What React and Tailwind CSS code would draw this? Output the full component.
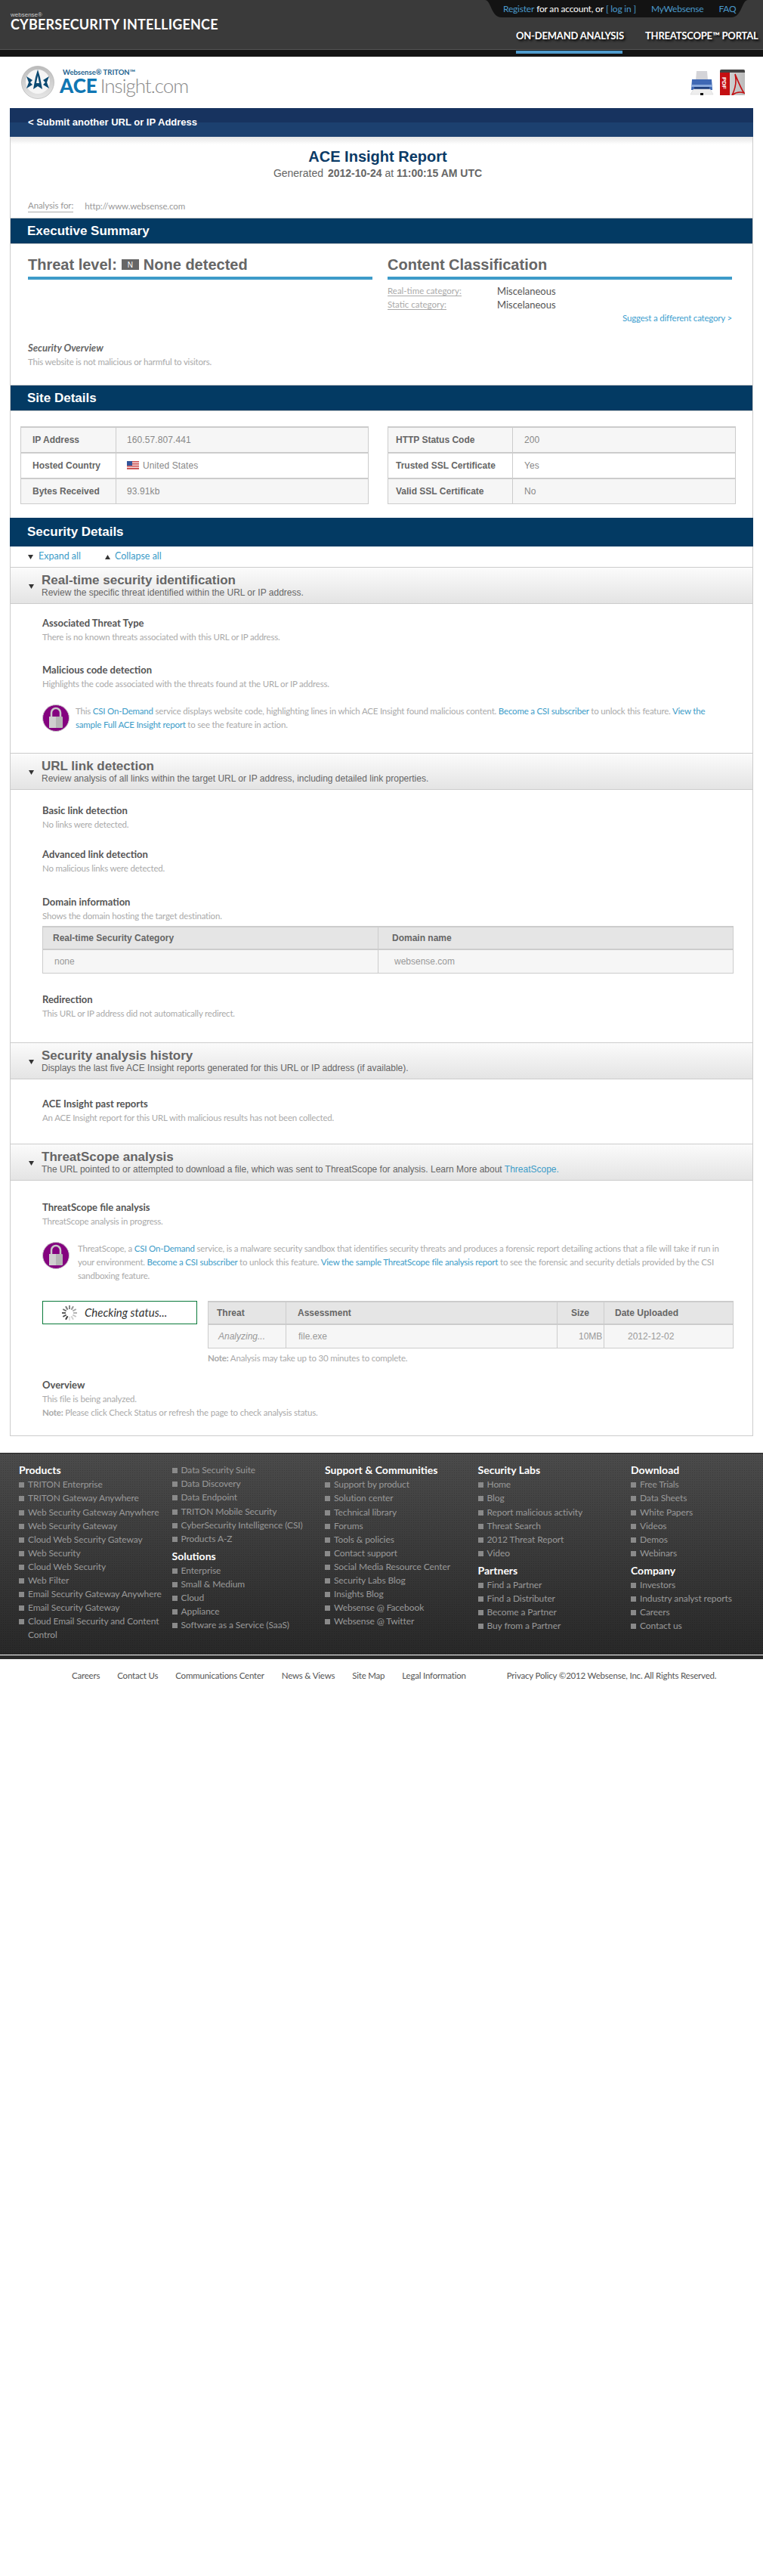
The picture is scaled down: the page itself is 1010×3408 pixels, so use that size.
import React from 'react';

const sans = "font-['Liberation_Sans',Arial,sans-serif]";

const footerCols = [
    [{ heading: 'Products', items: ['TRITON Enterprise', 'TRITON Gateway Anywhere', 'Web Security Gateway Anywhere', 'Web Security Gateway', 'Cloud Web Security Gateway', 'Web Security', 'Cloud Web Security', 'Web Filter', 'Email Security Gateway Anywhere', 'Email Security Gateway', 'Cloud Email Security and Content Control'] }],
    [
        { items: ['Data Security Suite', 'Data Discovery', 'Data Endpoint', 'TRITON Mobile Security', 'CyberSecurity Intelligence (CSI)', 'Products A-Z'] },
        { heading: 'Solutions', items: ['Enterprise', 'Small & Medium', 'Cloud', 'Appliance', 'Software as a Service (SaaS)'] },
    ],
    [{ heading: 'Support & Communities', items: ['Support by product', 'Solution center', 'Technical library', 'Forums', 'Tools & policies', 'Contact support', 'Social Media Resource Center', 'Security Labs Blog', 'Insights Blog', 'Websense @ Facebook', 'Websense @ Twitter'] }],
    [
        { heading: 'Security Labs', items: ['Home', 'Blog', 'Report malicious activity', 'Threat Search', '2012 Threat Report', 'Video'] },
        { heading: 'Partners', items: ['Find a Partner', 'Find a Distributer', 'Become a Partner', 'Buy from a Partner'] },
    ],
    [
        { heading: 'Download', items: ['Free Trials', 'Data Sheets', 'White Papers', 'Videos', 'Demos', 'Webinars'] },
        { heading: 'Company', items: ['Investors', 'Industry analyst reports', 'Careers', 'Contact us'] },
    ],
];

const bottomLinks = ['Careers', 'Contact Us', 'Communications Center', 'News & Views', 'Site Map', 'Legal Information'];

const A = ({ children }) => <a className="text-[#3c9cc8]">{children}</a>;

const SectionBar = ({ title }) => (
    <div className={`h-[35px] border-y border-[#ccc] bg-[#033a63] pl-[22px] text-[17px] font-bold leading-[33px] text-white ${sans}`}>
        {title}
    </div>
);

const Triangle = ({ up, className }) => (
    <svg width="7" height="6" viewBox="0 0 7 6" className={className}>
        <path d={up ? 'M3.5 0 L7 6 L0 6 Z' : 'M0 0 L7 0 L3.5 6 Z'} fill="#333" />
    </svg>
);

const AccordionHead = ({ title, children }) => (
    <div className="relative h-[49px] border-y border-[#ccc] bg-gradient-to-b from-[#fbfbfb] to-[#e4e4e4] pl-[41px] pt-[7px]">
        <Triangle className="absolute left-[24px] top-[22px]" />
        <div className={`text-[17px] font-bold leading-[20px] text-[#666] ${sans}`}>{title}</div>
        <div className={`-mt-px text-[12px] leading-[14px] text-[#666] ${sans}`}>{children}</div>
    </div>
);

const Item = ({ title, className = '', children }) => (
    <div className={className}>
        <div className="text-[13px] font-bold leading-[18px] text-[#555]">{title}</div>
        <div className="mt-px text-[11.5px] leading-[18px] tracking-[-0.2px] text-[#aaa]">{children}</div>
    </div>
);

const Lock = () => (
    <svg width="36" height="36" viewBox="0 0 36 36" className="shrink-0">
        <ellipse cx="18" cy="18" rx="17.5" ry="17.5" fill="#84037f" stroke="#c9c9c9" strokeWidth="1" />
        <path d="M12 17 V11 a6 6 0 0 1 12 0 V17" fill="none" stroke="#c8c8c8" strokeWidth="2.5" />
        <rect x="9" y="16" width="18" height="15" rx="1" fill="#b5b5b5" />
        <rect x="9" y="16" width="9" height="15" fill="#cfcfcf" />
    </svg>
);

const Spinner = () => (
    <svg width="24" height="24" viewBox="0 0 24 24">
        {[...Array(12)].map((_, i) => (
            <line key={i} x1="12" y1="2" x2="12" y2="7" stroke={`rgb(${60 + i * 15},${60 + i * 15},${60 + i * 15})`} strokeWidth="2" transform={`rotate(${i * 30 - 150} 12 12)`} />
        ))}
    </svg>
);

const Flag = () => (
    <svg width="16" height="11" viewBox="0 0 16 11" className="mr-[5px] inline-block align-[-1px]">
        <rect width="16" height="11" fill="#f4d8d8" />
        <rect y="0" width="16" height="1.5" fill="#c55" />
        <rect y="3" width="16" height="1.5" fill="#c55" />
        <rect y="6" width="16" height="1.5" fill="#c55" />
        <rect y="9" width="16" height="2" fill="#c55" />
        <rect width="7" height="6" fill="#33559a" />
    </svg>
);

const Printer = () => (
    <svg width="34" height="34" viewBox="0 0 34 34">
        <path d="M10 2 H24 L25 14 H9 Z" fill="#d4d4d8" />
        <path d="M4 13 H30 L31 27 H3 Z" fill="#3f68b4" />
        <rect x="3" y="20" width="28" height="3" fill="#8aa9dc" />
        <rect x="7" y="23" width="20" height="3" fill="#1f3f7d" />
        <path d="M6 26 H28 L32 33 H2 Z" fill="#eee" stroke="#ccc" strokeWidth="0.5" />
        <rect x="15" y="31" width="4" height="3" fill="#111" />
    </svg>
);

const PdfBook = () => (
    <div className="relative h-[34px] w-[33px] overflow-hidden rounded-t-[2px] bg-gradient-to-r from-[#ddd] to-[#bbb]">
        <div className="absolute inset-x-0 top-0 h-[4px] bg-[#444]" />
        <div className="absolute bottom-0 left-0 top-[4px] w-[13px] bg-[#c40f12]" />
        <span className={`absolute left-[-3px] top-[14px] rotate-90 text-[8px] font-bold leading-[8px] text-white ${sans}`}>PDF</span>
        <svg width="20" height="30" viewBox="0 0 20 30" className="absolute left-[13px] top-[4px]">
            <path d="M3 30 C8 20 9 10 7 2 C12 14 15 22 19 27 C13 25 8 26 3 30 Z" fill="none" stroke="#c40f12" strokeWidth="1.6" />
        </svg>
    </div>
);

const AceLogo = () => (
    <svg width="44" height="44" viewBox="0 0 44 44" className="shrink-0">
        <defs>
            <linearGradient id="ring" x1="0" y1="0" x2="0" y2="1">
                <stop offset="0" stopColor="#bbb" />
                <stop offset="1" stopColor="#e6e6e6" />
            </linearGradient>
        </defs>
        <circle cx="22" cy="22" r="21.5" fill="url(#ring)" stroke="#aaa" strokeWidth="0.6" />
        <circle cx="22" cy="21" r="16" fill="#f5f5f5" />
        <path d="M22 5 L25 15 L28 31 L22 27 L16 31 L19 15 Z" fill="#0c4a72" />
        <path d="M7 14 L15 19 L12 22 L15 25 L7 30 L10 22 Z" fill="#0c4a72" />
        <path d="M37 14 L29 19 L32 22 L29 25 L37 30 L34 22 Z" fill="#0c4a72" />
        <path d="M22 13 L24 23 H20 Z" fill="#f5f5f5" />
    </svg>
);

const DetailTable = ({ rows, firstW, labelPad, valuePad }) => (
    <div className="w-[461px] border-x border-b border-t-2 border-[#ccc]">
        {rows.map((row, i) => (
            <div key={row[0]} className={`flex items-center ${i > 0 ? 'h-[34px] border-t-2 border-[#ccc]' : 'h-[32px]'} ${i === 1 ? 'bg-white' : 'bg-[#f6f6f6]'} ${sans}`}>
                <div style={{ width: firstW, paddingLeft: labelPad }} className="flex h-full shrink-0 items-center border-r border-[#ccc] text-[12px] font-bold text-[#666]">
                    {row[0]}
                </div>
                <div style={{ paddingLeft: valuePad }} className="text-[12px] tracking-[0.1px] text-[#888]">
                    {row[2] && <Flag />}{row[1]}
                </div>
            </div>
        ))}
    </div>
);

const DataTable = ({ cols, values, className = '' }) => (
    <div className={`border-x border-b border-t-2 border-[#ccc] ${sans} ${className}`}>
        <div className="flex h-[28px] bg-[#e5e5e5] text-[12px] font-bold text-[#666]">
            {cols.map((c, i) => (
                <div key={c.label} style={{ width: c.w, paddingLeft: c.pl }} className={`flex shrink-0 items-center ${i < cols.length - 1 ? 'border-r border-[#ccc]' : ''}`}>
                    {c.label}
                </div>
            ))}
        </div>
        <div className="flex h-[32px] border-t-2 border-[#ccc] bg-[#f6f6f6] text-[12px] text-[#999]">
            {values.map((v, i) => (
                <div key={v.text} style={{ width: cols[i].w, paddingLeft: v.pl }} className={`flex shrink-0 items-center ${v.italic ? 'italic' : ''} ${i < cols.length - 1 ? 'border-r border-[#ccc]' : ''}`}>
                    {v.text}
                </div>
            ))}
        </div>
    </div>
);

const FooterCol = ({ groups }) => (
    <div className="w-[202.5px] shrink-0 pr-[4px]">
        {groups.map((g, gi) => (
            <div key={gi} className={gi > 0 ? 'mt-[5px]' : ''}>
                {g.heading && <div className="mb-px text-[14px] font-bold leading-[18px] text-white">{g.heading}</div>}
                <ul>
                    {g.items.map((item, i) => (
                        <li key={item} className={`flex text-[12px] leading-[18px] tracking-[-0.1px] text-[#999] ${gi === 0 && i === (g.heading ? 2 : 3) ? 'mt-px' : ''}`}>
                            <span className="mr-[5px] mt-[6px] h-[7px] w-[7px] shrink-0 bg-[#8a8a8a]" />
                            <span>{item}</span>
                        </li>
                    ))}
                </ul>
            </div>
        ))}
    </div>
);

const App = () => {
    return (
        <div className="min-h-[3408px] w-[1010px] bg-white font-[Lato,sans-serif]">
            {/* Top bar */}
            <div className="flex h-[66px] justify-between border-b border-[#555] bg-[#3a3a3a]">
                <div className="pl-[14px] pt-[15px]">
                    <div className={`text-[8px] leading-[9px] text-[#ccc] ${sans}`}>websense®</div>
                    <div className="whitespace-nowrap text-[18px] font-bold leading-[16px] tracking-[0.2px] text-white">CYBERSECURITY INTELLIGENCE</div>
                </div>
                <div className="w-[368px]">
                    <div className="flex h-[23px] w-[348px] items-center whitespace-nowrap bg-[#131313] pl-[24px] text-[12px] tracking-[-0.2px] text-white [clip-path:path('M0,0_C8,0_8,23_22,23_L326,23_C340,23_340,0_348,0Z')]">
                        <span className="text-[#4a9acb]">Register</span>
                        <span className="ml-[3px]">for an account, or</span>
                        <span className="ml-[3px] text-[#4a9acb]">[ log in ]</span>
                        <span className="ml-[20px] text-[#4a9acb]">MyWebsense</span>
                        <span className="ml-[20px] text-[#4a9acb]">FAQ</span>
                    </div>
                    <div className="flex whitespace-nowrap pl-[41px] pt-[14px] text-[13px] font-bold leading-[20px] tracking-[-0.2px] text-white [text-shadow:2px_2px_3px_#000]">
                        <span className="w-[171px]">ON-DEMAND ANALYSIS</span>
                        <span>THREATSCOPE™ PORTAL</span>
                    </div>
                </div>
            </div>
            <div className="h-[9px] bg-[#141414] pl-[683px] pt-px">
                <div className="h-[4px] w-[141px] bg-[#4f9bcd]" />
            </div>

            {/* Logo row */}
            <div className="flex h-[68px] items-center justify-between pl-[28px] pr-[24px]">
                <div className="flex items-center">
                    <AceLogo />
                    <div className="ml-[7px] pb-[4px]">
                        <div className="pl-[4px] text-[9.5px] font-bold leading-[12px] text-[#25648f]">Websense® TRITON™</div>
                        <div className="flex items-baseline leading-[22px]">
                            <span className="text-[26px] font-black text-[#0f76b3]">ACE</span>
                            <span className="ml-[4px] text-[26px] font-light tracking-[-1px] text-[#8a8a8a]">Insight.com</span>
                        </div>
                    </div>
                </div>
                <div className="flex items-center gap-[7px]">
                    <Printer />
                    <PdfBook />
                </div>
            </div>

            {/* Submit bar */}
            <div className={`mx-[13px] h-[38px] bg-[linear-gradient(#17335f_50%,#1c406f_50%)] pl-[24px] text-[13px] font-bold leading-[37px] text-white ${sans}`}>
                &lt; Submit another URL or IP Address
            </div>

            {/* Report card */}
            <div className="mx-[13px] border-x border-b border-[#ccc] bg-[linear-gradient(#e4e4e4,#fff_10px)]">
                <div className={`pt-[14px] text-center ${sans}`}>
                    <div className="pr-[10px] text-[20px] font-bold leading-[24px] text-[#0b3a66]">ACE Insight Report</div>
                    <div className="pr-[10px] text-[14px] leading-[20px] text-[#666]">Generated <b className="ml-[2px]">2012-10-24</b> at <b>11:00:15 AM UTC</b></div>
                </div>
                <div className="mt-[25px] flex pl-[23px] text-[11.5px] leading-[18px] tracking-[-0.1px] text-[#999]">
                    <span className="h-[17px] border-b border-[#aaa] leading-[16px]">Analysis for:</span>
                    <span className="ml-[15px]">http://www.websense.com</span>
                </div>
                <div className="h-[6px]" />

                <SectionBar title="Executive Summary" />
                <div className="flex h-[128px] gap-[20px] pl-[23px] pt-[13px]">
                    <div className="w-[456px]">
                        <div className={`flex h-[28px] items-center text-[20px] font-bold text-[#666] ${sans}`}>
                            Threat level:
                            <span className="mx-[6px] flex h-[14px] w-[23px] items-center justify-center bg-[#666] text-[10px] font-normal text-white">N</span>
                            None detected
                        </div>
                        <div className="mt-[2px] h-[4px] bg-[#3e9bc9]" />
                    </div>
                    <div className="w-[456px]">
                        <div className={`flex h-[28px] items-center text-[20px] font-bold text-[#666] ${sans}`}>Content Classification</div>
                        <div className="mt-[2px] h-[4px] bg-[#3e9bc9]" />
                        <div className="mt-[6px] flex text-[11.5px] leading-[18px]">
                            <span className="w-[145px] text-[#aaa]"><span className="border-b border-[#aaa]">Real-time category:</span></span>
                            <span className="text-[13px] text-[#555]">Miscelaneous</span>
                        </div>
                        <div className="flex text-[11.5px] leading-[18px]">
                            <span className="w-[145px] text-[#aaa]"><span className="border-b border-[#aaa]">Static category:</span></span>
                            <span className="text-[13px] text-[#555]">Miscelaneous</span>
                        </div>
                        <div className="text-right text-[11.5px] leading-[18px] tracking-[-0.2px] text-[#3ea0cf]">Suggest a different category &gt;</div>
                    </div>
                </div>
                <div className="pl-[23px]">
                    <div className="text-[13px] font-bold italic leading-[18px] text-[#666]">Security Overview</div>
                    <div className="mt-px text-[11.5px] leading-[18px] tracking-[-0.2px] text-[#aaa]">This website is not malicious or harmful to visitors.</div>
                </div>
                <div className="h-[21px]" />

                <SectionBar title="Site Details" />
                <div className="flex gap-[25px] pl-[13px] pt-[20px]">
                    <DetailTable
                        firstW={126}
                        labelPad={15}
                        valuePad={14}
                        rows={[['IP Address', '160.57.807.441'], ['Hosted Country', 'United States', true], ['Bytes Received', '93.91kb']]}
                    />
                    <DetailTable
                        firstW={165}
                        labelPad={10}
                        valuePad={15}
                        rows={[['HTTP Status Code', '200'], ['Trusted SSL Certificate', 'Yes'], ['Valid SSL Certificate', 'No']]}
                    />
                </div>

                <div className={`-mx-px mt-[18px] h-[38px] bg-[#033a63] pl-[23px] text-[17px] font-bold leading-[37px] text-white ${sans}`}>Security Details</div>
                <div className="flex h-[27px] items-center pl-[23px] text-[12.5px] text-[#3c9cc8]">
                    <Triangle />
                    <span className="ml-[7px] w-[88px]">Expand all</span>
                    <Triangle up />
                    <span className="ml-[6px]">Collapse all</span>
                </div>

                {/* Real-time */}
                <AccordionHead title="Real-time security identification">Review the specific threat identified within the URL or IP address.</AccordionHead>
                <div className="pb-[28px] pl-[42px] pr-[60px] pt-[16px]">
                    <Item title="Associated Threat Type">There is no known threats associated with this URL or IP address.</Item>
                    <Item title="Malicious code detection" className="mt-[25px]">Highlights the code associated with the threats found at the URL or IP address.</Item>
                    <div className="mt-[18px] flex gap-[8px]">
                        <Lock />
                        <p className="text-[11.5px] leading-[18px] tracking-[-0.2px] text-[#aaa]">
                            This <A>CSI On-Demand</A> service displays website code, highlighting lines in which ACE Insight found malicious content. <A>Become a CSI subscriber</A> to unlock this feature. <A>View the sample Full ACE Insight report</A> to see the feature in action.
                        </p>
                    </div>
                </div>

                {/* URL link */}
                <AccordionHead title="URL link detection">Review analysis of all links within the target URL or IP address, including detailed link properties.</AccordionHead>
                <div className="pb-[29px] pl-[42px] pr-[25px] pt-[18px]">
                    <Item title="Basic link detection">No links were detected.</Item>
                    <Item title="Advanced link detection" className="mt-[21px]">No malicious links were detected.</Item>
                    <Item title="Domain information" className="mt-[26px]">Shows the domain hosting the target destination.</Item>
                    <DataTable
                        className="mt-[4px]"
                        cols={[{ label: 'Real-time Security Category', w: 444, pl: 13 }, { label: 'Domain name', w: 467, pl: 18 }]}
                        values={[{ text: 'none', pl: 15 }, { text: 'websense.com', pl: 21 }]}
                    />
                    <Item title="Redirection" className="mt-[25px]">This URL or IP address did not automatically redirect.</Item>
                </div>

                {/* History */}
                <AccordionHead title="Security analysis history">Displays the last five ACE Insight reports generated for this URL or IP address (if available).</AccordionHead>
                <div className="pb-[25px] pl-[42px] pt-[23px]">
                    <Item title="ACE Insight past reports">An ACE Insight report for this URL with malicious results has not been collected.</Item>
                </div>

                {/* ThreatScope */}
                <AccordionHead title="ThreatScope analysis">
                    The URL pointed to or attempted to download a file, which was sent to ThreatScope for analysis. Learn More about <A>ThreatScope.</A>
                </AccordionHead>
                <div className="pb-[21px] pl-[42px] pr-[25px] pt-[26px]">
                    <Item title="ThreatScope file analysis">ThreatScope analysis in progress.</Item>
                    <div className="mt-[18px] flex gap-[11px]">
                        <Lock />
                        <p className="text-[11.5px] leading-[18px] tracking-[-0.2px] text-[#aaa]">
                            ThreatScope, a <A>CSI On-Demand</A> service, is a malware security sandbox that identifies security threats and produces a forensic report detailing actions that a file will take if run in your environment. <A>Become a CSI subscriber</A> to unlock this feature. <A>View the sample ThreatScope file analysis report</A> to see the forensic and security detials provided by the CSI sandboxing feature.
                        </p>
                    </div>
                    <div className="mt-[24px] flex">
                        <div className="flex h-[31px] w-[205px] shrink-0 items-center border border-[#0a7a3a] pl-[23px] text-[15px] italic text-[#333]">
                            <Spinner />
                            <span className="ml-[8px]">Checking status...</span>
                        </div>
                        <div className="ml-[14px] grow">
                            <DataTable
                                cols={[
                                    { label: 'Threat', w: 103, pl: 11 },
                                    { label: 'Assessment', w: 359, pl: 15 },
                                    { label: 'Size', w: 62, pl: 18 },
                                    { label: 'Date Uploaded', w: 168, pl: 14 },
                                ]}
                                values={[
                                    { text: 'Analyzing...', pl: 13, italic: true },
                                    { text: 'file.exe', pl: 16 },
                                    { text: '10MB', pl: 28 },
                                    { text: '2012-12-02', pl: 31 },
                                ]}
                            />
                            <div className="mt-[4px] text-[11.5px] leading-[18px] tracking-[-0.2px] text-[#aaa]"><b>Note:</b> Analysis may take up to 30 minutes to complete.</div>
                        </div>
                    </div>
                    <Item title="Overview" className="mt-[17px]">This file is being analyzed.</Item>
                    <div className="text-[11.5px] leading-[18px] tracking-[-0.2px] text-[#aaa]"><b>Note:</b> Please click Check Status or refresh the page to check analysis status.</div>
                </div>
            </div>

            {/* Footer */}
            <div className="mt-[22px] h-[267px] border-t border-[#222] bg-[radial-gradient(#0000002e_1px,transparent_1px),linear-gradient(#4b4b4b,#282828)] bg-[length:3px_3px,100%_100%] pl-[25px] pt-[13px]">
                <div className="flex">
                    {footerCols.map((groups, i) => <FooterCol key={i} groups={groups} />)}
                </div>
            </div>
            <div className="h-[6px] border-t border-white bg-[#2a2a2a]" />
            <div className="flex whitespace-nowrap pl-[95px] pt-[13px] text-[11.5px] leading-[18px] tracking-[-0.2px] text-[#555]">
                <div className="flex gap-[23px]">
                    {bottomLinks.map((l) => <span key={l}>{l}</span>)}
                </div>
                <span className="ml-[54px]">Privacy Policy ©2012 Websense, Inc. All Rights Reserved.</span>
            </div>
        </div>
    );
};

export default App;
